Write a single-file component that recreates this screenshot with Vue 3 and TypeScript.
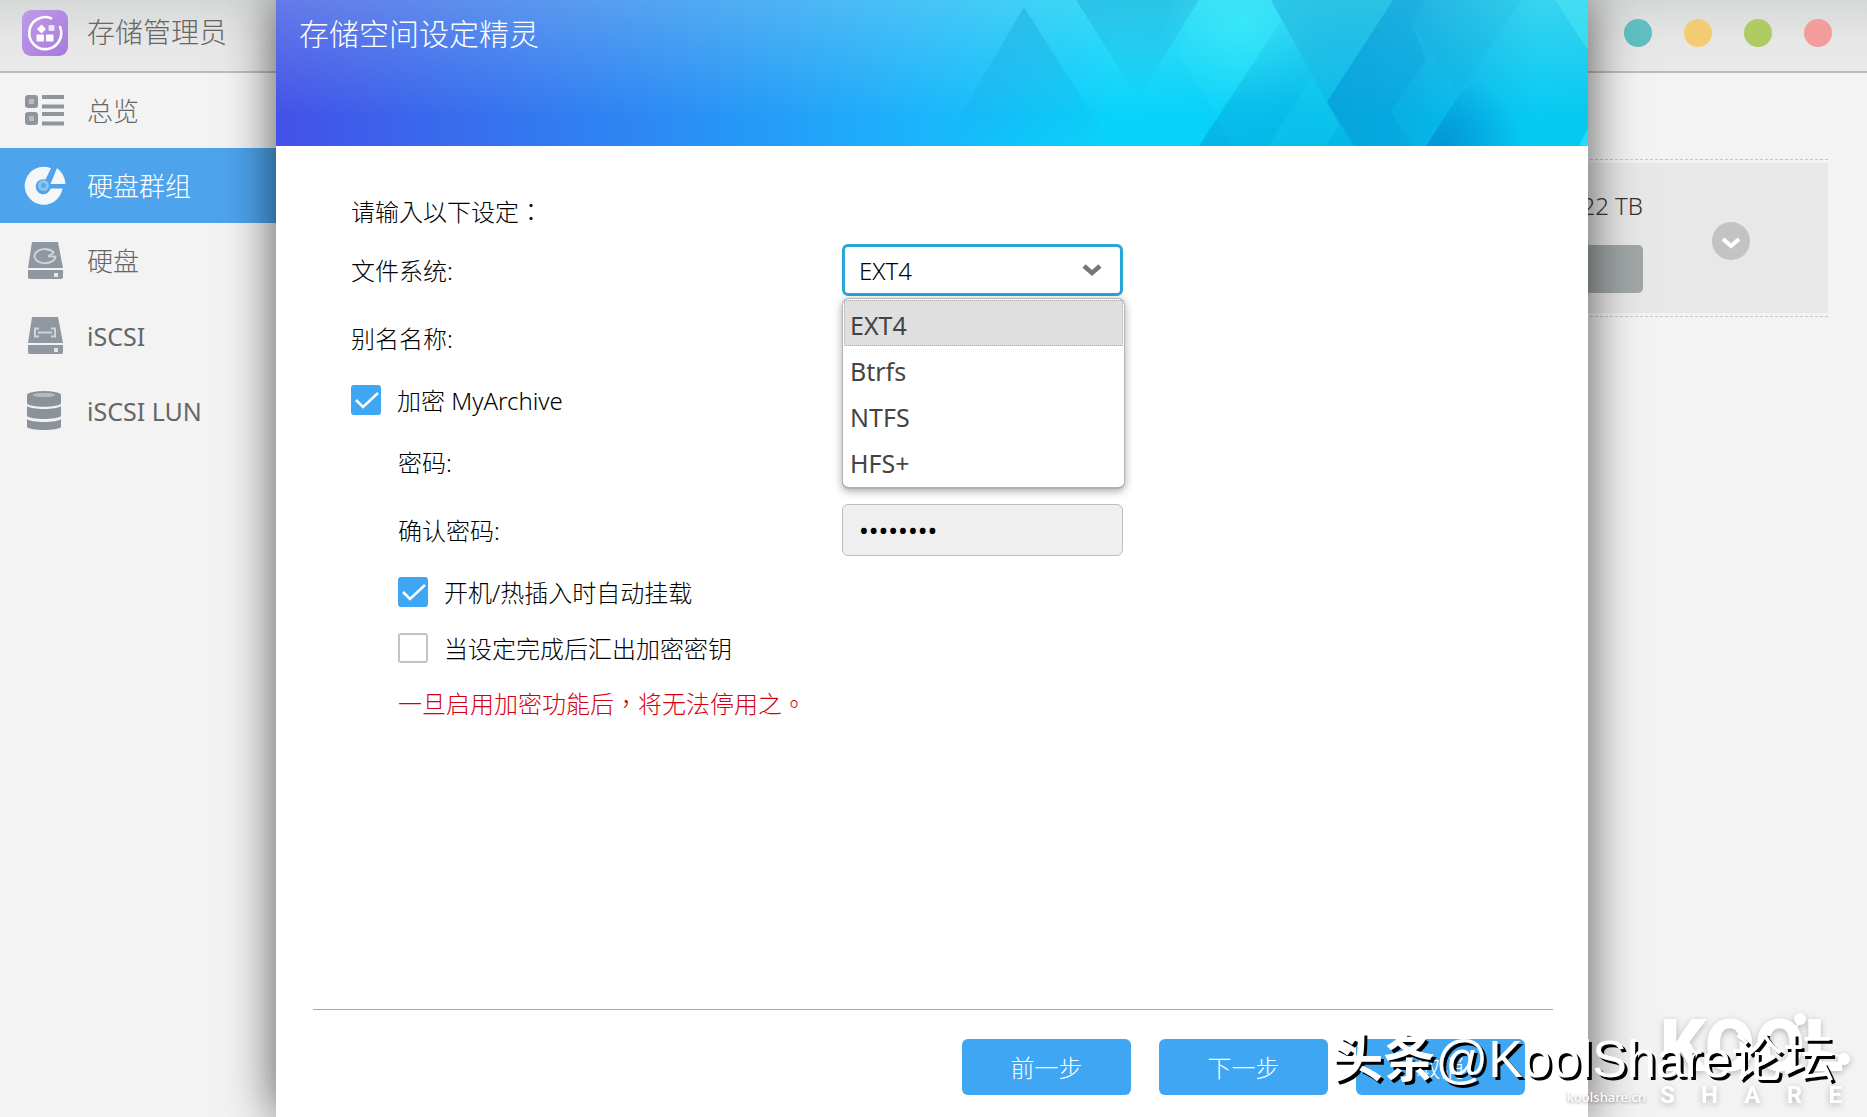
<script setup lang="ts">
import { ref } from 'vue'

interface NavItem {
  id: string
  label: string
  latin?: boolean
}

const navItems: NavItem[] = [
  { id: 'overview', label: '总览' },
  { id: 'volume', label: '硬盘群组' },
  { id: 'disk', label: '硬盘' },
  { id: 'iscsi', label: 'iSCSI', latin: true },
  { id: 'lun', label: 'iSCSI LUN', latin: true },
]
const activeNav = ref('volume')

const windowDots = ['teal', 'amber', 'green', 'red']

const fileSystems = ['EXT4', 'Btrfs', 'NTFS', 'HFS+']
const fileSystem = ref('EXT4')
const listOpen = ref(true)

const alias = ref('')
const encrypt = ref(true)
const password = ref('archive1')
const confirmPassword = ref('archive1')
const autoMount = ref(true)
const exportKey = ref(false)

function choose(name: string) {
  fileSystem.value = name
  listOpen.value = false
}
</script>

<template>
  <div class="app">
    <header class="topbar">
      <svg class="app-icon" viewBox="0 0 46 46" aria-hidden="true">
        <defs>
          <linearGradient id="appGrad" x1="0" y1="0" x2="1" y2="1">
            <stop offset="0" stop-color="#c09be8" />
            <stop offset="1" stop-color="#a57bdb" />
          </linearGradient>
        </defs>
        <rect width="46" height="46" rx="9" fill="url(#appGrad)" />
        <path d="M29 8.200A16 16 0 1 0 38 17" fill="none" stroke="#fff" stroke-width="2.600" stroke-linecap="round" />
        <path d="M19.500 14.500l4.500 4.500-4.500 4.500-4.500-4.500z" fill="#fff" />
        <rect x="26.500" y="15" width="6" height="6" rx="1" fill="#efe4fa" />
        <rect x="14.500" y="24.500" width="7.500" height="7" rx="1" fill="#fff" />
        <rect x="24" y="24.500" width="7.500" height="7" rx="1" fill="#fff" />
      </svg>
      <h1 class="app-title">存储管理员</h1>
      <div class="dots">
        <button v-for="dot in windowDots" :key="dot" type="button" class="dot" :class="dot" :aria-label="dot"></button>
      </div>
    </header>

    <div class="workspace">
      <nav class="sidebar">
        <a
          v-for="item in navItems"
          :key="item.id"
          href="#"
          class="nav-item"
          :class="{ active: item.id === activeNav }"
          @click.prevent="activeNav = item.id"
        >
          <svg class="nav-icon" viewBox="0 0 44 44" aria-hidden="true">
            <g v-if="item.id === 'overview'">
              <rect x="5" y="8" width="9" height="9" rx="1" fill="#b9bdc0" stroke="#8f959b" stroke-width="4" />
              <rect x="5" y="25" width="9" height="9" rx="1" fill="#b9bdc0" stroke="#8f959b" stroke-width="4" />
              <path d="M20 8h22M20 17.500h22M20 25h22M20 34.500h22" stroke="#8f959b" stroke-width="4" />
            </g>
            <g v-else-if="item.id === 'volume'">
              <path
                d="M29 4.200A19 19 0 1 0 40.500 24.500H28.500A7.500 7.500 0 1 1 23.500 15.500z"
                fill="#f4f6f8"
              />
              <circle cx="21.500" cy="21.500" r="5.500" fill="#8ec3f0" />
              <circle cx="21.500" cy="21.500" r="2.500" fill="#5aa9ec" />
              <path d="M35 4A22 22 0 0 1 43.500 20H28.500z" fill="#f4f6f8" />
            </g>
            <g v-else-if="item.id === 'disk' || item.id === 'iscsi'">
              <path d="M10 3h26l5 26H6z" fill="#8f97a0" />
              <path d="M6 31h35v7a2 2 0 0 1-2 2H8a2 2 0 0 1-2-2z" fill="#8f97a0" />
              <rect x="32" y="34" width="4" height="4" fill="#e4e7e9" />
              <g v-if="item.id === 'disk'" fill="none" stroke="#cfd3d7" stroke-width="2">
                <path d="M32 13.500a10.500 7 0 1 0 1.500 4h-7" />
                <path d="M26 17.500l6-4" />
              </g>
              <path
                v-else
                d="M17 14.500h-4v8h4M29 14.500h4v8h-4M16 18.500h14"
                fill="none"
                stroke="#cfd3d7"
                stroke-width="2"
              />
            </g>
            <g v-else fill="#8b929a">
              <path d="M5 6v8c0 5 34 5 34 0V6z" />
              <path d="M5 17c4 4 30 4 34 0v10c-3 4-31 4-34 0z" />
              <path d="M5 30c4 4 30 4 34 0v8c-3 4-31 4-34 0z" />
              <ellipse cx="22" cy="6" rx="17" ry="4" />
              <ellipse cx="22" cy="6" rx="11" ry="2" fill="#b6bbc0" />
            </g>
          </svg>
          <span class="nav-label" :class="{ latin: item.latin }">{{ item.label }}</span>
        </a>
      </nav>

      <main class="content">
        <section class="volume-card">
          <div class="volume-body">
            <div class="capacity">
              <span class="capacity-text">22 TB</span>
              <div class="capacity-bar"></div>
            </div>
            <button type="button" class="expand" aria-label="展开">
              <svg viewBox="0 0 38 38" aria-hidden="true">
                <circle cx="19" cy="19" r="19" fill="#c3c3c3" />
                <path d="M11 17l8 7 8-7" fill="none" stroke="#fff" stroke-width="4" />
              </svg>
            </button>
          </div>
        </section>
      </main>
    </div>

    <div class="overlay">
      <section class="dialog" role="dialog" aria-labelledby="wizard-title">
        <header class="banner">
          <svg class="banner-art" viewBox="0 0 1312 146" preserveAspectRatio="none" aria-hidden="true">
            <defs>
              <linearGradient id="sea" x1="0" y1="0" x2="1" y2="0">
                <stop offset="0" stop-color="#4351e8" />
                <stop offset="0.250" stop-color="#2f82f3" />
                <stop offset="0.480" stop-color="#1cb2fb" />
                <stop offset="0.640" stop-color="#08d4fb" />
                <stop offset="1" stop-color="#05c9f1" />
              </linearGradient>
              <linearGradient id="glow" x1="0" y1="0" x2="0" y2="1">
                <stop offset="0" stop-color="#c8eee8" stop-opacity="0.260" />
                <stop offset="0.800" stop-color="#c8eee8" stop-opacity="0" />
              </linearGradient>
              <linearGradient id="fadeDown" x1="0" y1="0" x2="0" y2="1">
                <stop offset="0" stop-color="#0a90c8" stop-opacity="0.300" />
                <stop offset="1" stop-color="#0a90c8" stop-opacity="0" />
              </linearGradient>
              <linearGradient id="fadeUp" x1="0" y1="0" x2="0" y2="1">
                <stop offset="0" stop-color="#048ecb" stop-opacity="0" />
                <stop offset="1" stop-color="#048ecb" stop-opacity="0.380" />
              </linearGradient>
              <radialGradient id="spark" gradientUnits="userSpaceOnUse" cx="965" cy="25" r="80">
                <stop offset="0" stop-color="#3ff4ff" stop-opacity="0.500" />
                <stop offset="1" stop-color="#3ff4ff" stop-opacity="0" />
              </radialGradient>
              <linearGradient id="mid" gradientUnits="userSpaceOnUse" x1="1051" y1="0" x2="1260" y2="0">
                <stop offset="0" stop-color="#0682cc" stop-opacity="0.500" />
                <stop offset="0.400" stop-color="#0682cc" stop-opacity="0.380" />
                <stop offset="1" stop-color="#0682cc" stop-opacity="0" />
              </linearGradient>
              <radialGradient id="deep" gradientUnits="userSpaceOnUse" cx="1165" cy="150" r="80">
                <stop offset="0" stop-color="#0078c8" stop-opacity="0.550" />
                <stop offset="1" stop-color="#0078c8" stop-opacity="0" />
              </radialGradient>
            </defs>
            <rect width="1312" height="146" fill="url(#sea)" />
            <rect width="1312" height="146" fill="url(#glow)" />
            <path d="M748 7L836 146H666z" fill="url(#fadeDown)" />
            <path d="M800 0L862 98L923 0z" fill="url(#fadeDown)" />
            <rect x="860" width="200" height="146" fill="url(#spark)" />
            <path d="M923 0L902 55L940 117L1019 0z" fill="#3ff4ff" opacity="0.080" />
            <path d="M902 55L956 146H923L940 117z" fill="#0bb4e4" opacity="0.150" />
            <path d="M1019 0L923 146H1078L1051 102L995 0z" fill="url(#fadeUp)" />
            <path d="M1037 77L992 146H1050L1063 125z" fill="#22dcf8" opacity="0.220" />
            <path d="M995 0H1117L1051 102z" fill="#1498cc" opacity="0.340" />
            <path d="M1117 0L1051 102L1078 146H1312V50L1279 0z" fill="url(#mid)" />
            <path d="M1117 0L1051 102L1078 146H1136L1115 112L1150 60L1135 22L1150 0z" fill="#0790cf" opacity="0.180" />
            <path d="M1150 0L1135 22L1183 95L1245 0z" fill="#0790cf" opacity="0.080" />
            <path d="M1183 95L1150 146H1312V60L1240 40z" fill="url(#deep)" />
            <path d="M1279 0L1312 50V0z" fill="#5cf0fa" opacity="0.350" />
            <path d="M1303 146L1312 128V146z" fill="#5cf0fa" opacity="0.400" />
          </svg>
          <h2 id="wizard-title" class="banner-title">存储空间设定精灵</h2>
        </header>

        <form class="form" @submit.prevent>
          <p class="intro">请输入以下设定：</p>

          <div class="row">
            <label class="row-label" for="fs">文件系统:</label>
            <div class="select-wrap">
              <select id="fs" v-model="fileSystem" class="field select" @mousedown.prevent="listOpen = !listOpen">
                <option v-for="name in fileSystems" :key="name" :value="name">{{ name }}</option>
              </select>
              <svg class="chevron" viewBox="0 0 20 14" aria-hidden="true">
                <path d="M2 3l8 7 8-7" fill="none" stroke="#777" stroke-width="4.500" />
              </svg>
              <ul v-if="listOpen" class="menu" role="listbox" aria-label="文件系统">
                <li
                  v-for="name in fileSystems"
                  :key="name"
                  role="option"
                  class="option"
                  :class="{ chosen: name === fileSystem }"
                  :aria-selected="name === fileSystem"
                  @click="choose(name)"
                >
                  {{ name }}
                </li>
              </ul>
            </div>
          </div>

          <div class="row">
            <label class="row-label" for="alias">别名名称:</label>
            <input id="alias" v-model="alias" class="field" type="text" />
          </div>

          <label class="check">
            <span class="box">
              <input v-model="encrypt" type="checkbox" />
              <svg v-if="encrypt" class="tick" viewBox="0 0 30 30" aria-hidden="true">
                <path d="M5 15l7 7L27 8" fill="none" stroke="#fff" stroke-width="2.500" />
              </svg>
            </span>
            <span class="check-label">加密 MyArchive</span>
          </label>

          <div class="nested">
            <div class="row">
              <label class="row-label" for="pw">密码:</label>
              <input id="pw" v-model="password" class="field" type="password" />
            </div>
            <div class="row">
              <label class="row-label" for="pw2">确认密码:</label>
              <input id="pw2" v-model="confirmPassword" class="field" type="password" />
            </div>
            <label class="check">
              <span class="box">
                <input v-model="autoMount" type="checkbox" />
                <svg v-if="autoMount" class="tick" viewBox="0 0 30 30" aria-hidden="true">
                  <path d="M5 15l7 7L27 8" fill="none" stroke="#fff" stroke-width="2.500" />
                </svg>
              </span>
              <span class="check-label">开机/热插入时自动挂载</span>
            </label>
            <label class="check">
              <span class="box">
                <input v-model="exportKey" type="checkbox" />
                <svg v-if="exportKey" class="tick" viewBox="0 0 30 30" aria-hidden="true">
                  <path d="M5 15l7 7L27 8" fill="none" stroke="#fff" stroke-width="2.500" />
                </svg>
              </span>
              <span class="check-label">当设定完成后汇出加密密钥</span>
            </label>
            <p class="warning">一旦启用加密功能后，将无法停用之。</p>
          </div>
        </form>

        <footer class="actions">
          <button type="button" class="btn">前一步</button>
          <button type="button" class="btn">下一步</button>
          <button type="button" class="btn">取消</button>
        </footer>
      </section>
    </div>

    <div class="brand">
      <div class="brand-name">
        KOOL
        <svg class="brand-nodes" viewBox="0 0 190 64" aria-hidden="true">
          <path d="M130 24L142 8M160 40L184 46" stroke="#fff" stroke-width="2" />
          <circle cx="140" cy="8" r="6" fill="#fff" />
          <circle cx="184" cy="48" r="6" fill="#fff" />
        </svg>
      </div>
      <div class="brand-sub"><span v-for="c in 'SHARE'" :key="c">{{ c }}</span></div>
    </div>
    <div class="brand-site">koolshare.cn</div>
    <div class="credit"><b>头条</b>@KoolShare论坛</div>
  </div>
</template>

<style>
html,
body {
  background: #f3f3f3;
}
</style>

<style scoped>
* {
  box-sizing: border-box;
}

.app {
  position: relative;
  display: flex;
  flex-direction: column;
  min-height: 100vh;
  overflow: hidden;
  background: #f3f3f3;
  color: #000;
  font-family: 'Noto Sans', 'Noto Sans CJK SC', sans-serif;
  font-size: 24px;
  font-weight: 300;
}

h1,
h2,
p,
ul {
  margin: 0;
  padding: 0;
  font-weight: 300;
}

button,
input,
select {
  font: inherit;
}

.topbar {
  display: flex;
  align-items: center;
  height: 73px;
  padding: 0 35px 6px 22px;
  border-bottom: 2px solid #bcbcbc;
  background: linear-gradient(#d6d8d8, #e7e7e7 60%, #e9e9e9);
}

.app-icon {
  width: 46px;
  height: 46px;
}

.app-title {
  margin-left: 19px;
  padding-bottom: 2px;
  color: #666;
  font-size: 28px;
  line-height: 40px;
}

.dots {
  display: flex;
  gap: 32px;
  margin-left: auto;
}

.dot {
  width: 28px;
  height: 28px;
  padding: 0;
  border: 0;
  border-radius: 50%;
}

.teal {
  background: #62c0c2;
}

.amber {
  background: #f2cc72;
}

.green {
  background: #b0cb62;
}

.red {
  background: #f29c9c;
}

.workspace {
  display: flex;
  flex: 1;
}

.sidebar {
  width: 300px;
}

.nav-item {
  display: flex;
  align-items: center;
  gap: 21px;
  height: 75px;
  padding-left: 22px;
  color: #666;
  font-size: 26px;
  text-decoration: none;
}

.nav-item.active {
  background: #4da3ec;
  color: #fff;
}

.nav-icon {
  width: 44px;
  height: 44px;
}

.nav-label {
  padding-bottom: 2px;
}

.nav-label.latin {
  padding-bottom: 0;
  font-size: 25px;
  font-weight: 400;
}

.content {
  flex: 1;
  padding: 86px 39px 0 0;
}

.volume-card {
  padding: 3px 0;
  border-top: 1px dashed #c6c6c6;
  border-bottom: 1px dashed #c6c6c6;
}

.volume-body {
  display: flex;
  align-items: center;
  justify-content: flex-end;
  height: 150px;
  padding: 6px 78px 0 0;
  background: #e8e8e8;
}

.capacity {
  display: flex;
  flex-direction: column;
  align-items: flex-end;
  gap: 22px;
  margin-right: 69px;
}

.capacity-text {
  color: #333;
  line-height: 34px;
}

.capacity-bar {
  width: 160px;
  height: 48px;
  border-radius: 5px;
  background: #a1a6a7;
}

.expand {
  width: 38px;
  height: 38px;
  padding: 0;
  border: 0;
  background: none;
}

.expand svg {
  display: block;
}

.overlay {
  position: absolute;
  inset: 0;
  padding: 0 279px 0 276px;
}

.dialog {
  display: flex;
  flex-direction: column;
  height: 100%;
  background: #fff;
  box-shadow: 0 0 48px rgba(0, 0, 0, 0.65);
}

.banner {
  position: relative;
  height: 146px;
  padding: 12px 23px;
}

.banner-art {
  position: absolute;
  inset: 0;
  width: 100%;
  height: 100%;
}

.banner-title {
  position: relative;
  color: #fff;
  font-size: 30px;
  line-height: 44px;
}

.form {
  display: flex;
  flex-direction: column;
  gap: 16px;
  padding: 46px 75px 0;
}

.intro {
  height: 36px;
  font-family: 'Noto Sans CJK TC', sans-serif;
  line-height: 38px;
}

.row {
  display: flex;
  align-items: center;
  height: 52px;
}

.row-label {
  width: 491px;
  padding-bottom: 2px;
}

.nested {
  display: flex;
  flex-direction: column;
  gap: 16px;
  padding-left: 47px;
}

.nested .row-label {
  width: 444px;
}

.field {
  display: block;
  width: 281px;
  height: 52px;
  padding: 0 16px;
  border: 1px solid #bdbdbd;
  border-radius: 6px;
  background: #efefef;
  color: #000;
}

.field[type='password'] {
  font-size: 26px;
  font-weight: 400;
}

.select-wrap {
  position: relative;
}

.select {
  border: 3px solid #2aa5d8;
  padding: 0 14px;
  background: #fff;
  appearance: none;
  outline: none;
}

.chevron {
  position: absolute;
  top: 19px;
  right: 21px;
  width: 20px;
  height: 14px;
  pointer-events: none;
}

.menu {
  position: absolute;
  z-index: 2;
  top: 54px;
  left: 0;
  width: 283px;
  padding: 1px 1px 3px;
  border: 1px solid #b4b4b8;
  border-bottom: 2px solid #b0b0b4;
  border-radius: 7px;
  background: #fff;
  box-shadow: 0 2px 8px rgba(0, 0, 0, 0.35);
  list-style: none;
}

.option {
  height: 46px;
  padding-left: 5px;
  border: 1px dotted transparent;
  color: #444;
  font-size: 25px;
  font-weight: 400;
  line-height: 48px;
}

.option.chosen {
  border-color: #aaa;
  background: #dfdfdf;
}

.check {
  display: flex;
  align-items: center;
  gap: 16px;
  height: 40px;
}

.check-label {
  padding-bottom: 2px;
}

.box {
  position: relative;
  width: 30px;
  height: 30px;
}

.box input {
  display: block;
  width: 30px;
  height: 30px;
  margin: 0;
  border: 2px solid #c4c4c4;
  border-radius: 3px;
  background: #fff;
  appearance: none;
}

.box input:checked {
  border-color: #3ea6f2;
  background: #3ea6f2;
}

.tick {
  position: absolute;
  inset: 0;
  pointer-events: none;
}

.warning {
  height: 40px;
  color: #d4000f;
  font-family: 'Noto Sans CJK TC', sans-serif;
  line-height: 38px;
}

.actions {
  display: flex;
  justify-content: flex-end;
  gap: 28px;
  margin: auto 35px 0 37px;
  padding: 29px 28px 22px 0;
  border-top: 1px solid #a8a8a8;
}

.btn {
  width: 169px;
  height: 56px;
  padding: 0 0 2px;
  border: 0;
  border-radius: 6px;
  background: #3ea6f2;
  color: #fff;
}

.brand {
  position: absolute;
  right: 17px;
  bottom: 10px;
  width: 190px;
  color: #fff;
  font-family: Roboto, sans-serif;
  filter: drop-shadow(0 2px 3px rgba(0, 0, 0, 0.25));
}

.brand-name {
  position: relative;
  font-size: 72px;
  font-weight: 900;
  line-height: 72px;
}

.brand-nodes {
  position: absolute;
  top: 0;
  left: 0;
  width: 190px;
  height: 64px;
}

.brand-sub {
  display: flex;
  justify-content: space-between;
  padding: 0 8px 0 0;
  font-size: 24px;
  font-weight: 700;
  line-height: 24px;
}

.brand-site {
  position: absolute;
  right: 221px;
  bottom: 10px;
  color: #fff;
  font-size: 13px;
  font-weight: 500;
  line-height: 20px;
  text-shadow: 0 1px 3px rgba(0, 0, 0, 0.4);
}

.credit {
  position: absolute;
  right: 32px;
  bottom: 24px;
  color: #fff;
  font-family: 'Liberation Sans', 'Noto Sans CJK SC', sans-serif;
  font-size: 52px;
  font-weight: 400;
  line-height: 68px;
  text-shadow: 3px 3px 0 #000;
  white-space: nowrap;
}
</style>
